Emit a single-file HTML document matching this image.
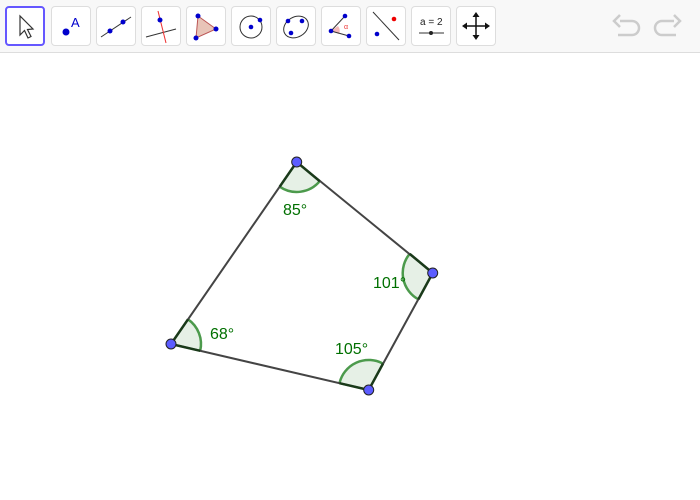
<!DOCTYPE html>
<html><head><style>
body{margin:0;width:700px;height:500px;background:#fff;overflow:hidden;font-family:"Liberation Sans",sans-serif}
.tb{position:absolute;left:0;top:0;width:700px;height:52px;background:#f8f8f8;border-bottom:1px solid #ddd}
.b{position:absolute;top:6px;width:38px;height:38px;background:#fff;border:1px solid #ddd;border-radius:4px}
.b svg{position:absolute;left:0;top:0}
.sel{border:2px solid #6557ff;width:36px;height:36px}
</style></head><body>
<div class="tb">
<div class="b sel" style="left:5px"><svg width="36" height="36"><path d="M13 8 L13 27 L17.5 22.5 L21 30 L24 28.5 L20.5 21.5 L26 21 Z" fill="#fff" stroke="#333" stroke-width="1.2"/></svg></div>
<div class="b" style="left:51px"><svg width="38" height="38"><circle cx="14" cy="25" r="3.5" fill="#00c"/><text x="19" y="20" font-size="13" fill="#00c" font-family="Liberation Sans">A</text></svg></div>
<div class="b" style="left:96px"><svg width="38" height="38"><line x1="4" y1="30" x2="34" y2="10" stroke="#333"/><circle cx="13" cy="24" r="2.5" fill="#00c"/><circle cx="26" cy="15" r="2.5" fill="#00c"/></svg></div>
<div class="b" style="left:141px"><svg width="38" height="38"><line x1="4" y1="30" x2="34" y2="22" stroke="#333"/><line x1="16" y1="4" x2="24" y2="36" stroke="#e33"/><circle cx="18" cy="13" r="2.5" fill="#00c"/></svg></div>
<div class="b" style="left:186px"><svg width="38" height="38"><path d="M11 9 L29 22 L9 31 Z" fill="#e8c4b8" stroke="#b55"/><circle cx="11" cy="9" r="2.5" fill="#00c"/><circle cx="29" cy="22" r="2.5" fill="#00c"/><circle cx="9" cy="31" r="2.5" fill="#00c"/></svg></div>
<div class="b" style="left:231px"><svg width="38" height="38"><circle cx="19" cy="20" r="11" fill="none" stroke="#333"/><circle cx="19" cy="20" r="2.3" fill="#00c"/><circle cx="28" cy="13" r="2.3" fill="#00c"/></svg></div>
<div class="b" style="left:276px"><svg width="38" height="38"><ellipse cx="19" cy="20" rx="13" ry="10" transform="rotate(-30 19 20)" fill="none" stroke="#333"/><circle cx="11" cy="14" r="2.3" fill="#00c"/><circle cx="25" cy="14" r="2.3" fill="#00c"/><circle cx="14" cy="26" r="2.3" fill="#00c"/></svg></div>
<div class="b" style="left:321px"><svg width="38" height="38"><path d="M9 24 L16 19 A8 8 0 0 1 17 27 Z" fill="#f4b8b8"/><line x1="9" y1="24" x2="23" y2="9" stroke="#333"/><line x1="9" y1="24" x2="27" y2="29" stroke="#333"/><circle cx="9" cy="24" r="2.3" fill="#00c"/><circle cx="23" cy="9" r="2.3" fill="#00c"/><circle cx="27" cy="29" r="2.3" fill="#00c"/><text x="22" y="22" font-size="7" fill="#e33">α</text></svg></div>
<div class="b" style="left:366px"><svg width="38" height="38"><line x1="6" y1="5" x2="32" y2="33" stroke="#333"/><circle cx="27" cy="12" r="2.3" fill="#e00"/><circle cx="10" cy="27" r="2.3" fill="#00c"/></svg></div>
<div class="b" style="left:411px"><svg width="38" height="38"><text x="8" y="18" font-size="10" fill="#222">a = 2</text><line x1="7" y1="26" x2="32" y2="26" stroke="#333"/><circle cx="19" cy="26" r="2" fill="#222"/></svg></div>
<div class="b" style="left:456px"><svg width="38" height="38"><path d="M19 7 V31 M7 19 H31" stroke="#111" stroke-width="1.5"/><path d="M19 5 L15.5 10 H22.5Z M19 33 L15.5 28 H22.5Z M5 19 L10 15.5 V22.5Z M33 19 L28 15.5 V22.5Z" fill="#111"/></svg></div>
<svg style="position:absolute;left:610px;top:12px" width="75" height="30"><path d="M10 9 H22 A7 7 0 0 1 22 23 H8 M10 3 L4 9 L10 15" fill="none" stroke="#ccc" stroke-width="2.5"/><path d="M64 9 H52 A7 7 0 0 0 52 23 H66 M64 3 L70 9 L64 15" fill="none" stroke="#ccc" stroke-width="2.5"/></svg>
</div>
<svg style="position:absolute;left:0;top:0" width="700" height="500">
<g fill="#e6f0e6" stroke="none">
<path d="M296.7,162 L279.7,186.7 A30,30 0 0 0 319.7,181.2 Z"/>
<path d="M432.7,273 L409.7,253.8 A30,30 0 0 0 418.4,299.4 Z"/>
<path d="M368.7,390 L339.5,383.2 A30,30 0 0 1 383,363.6 Z"/>
<path d="M171,344 L188,319.3 A30,30 0 0 1 200.2,350.8 Z"/>
</g>
<g fill="none" stroke="#4c9a4c" stroke-width="2.5">
<path d="M279.7,186.7 A30,30 0 0 0 319.7,181.2"/>
<path d="M409.7,253.8 A30,30 0 0 0 418.4,299.4"/>
<path d="M339.5,383.2 A30,30 0 0 1 383,363.6"/>
<path d="M188,319.3 A30,30 0 0 1 200.2,350.8"/>
</g>
<path d="M296.7,162 L432.7,273 L368.7,390 L171,344 Z" fill="none" stroke="#444" stroke-width="2"/>
<path d="M296.7,162 L279.7,186.7 M296.7,162 L319.7,181.2 M432.7,273 L409.7,253.8 M432.7,273 L418.4,299.4 M368.7,390 L339.5,383.2 M368.7,390 L383,363.6 M171,344 L188,319.3 M171,344 L200.2,350.8" stroke="#1a3a1a" stroke-width="2.5"/>
<g fill="#5c5cff" stroke="#222" stroke-width="1">
<circle cx="296.7" cy="162" r="5"/><circle cx="432.7" cy="273" r="5"/><circle cx="368.7" cy="390" r="5"/><circle cx="171" cy="344" r="5"/>
</g>
<g fill="#007000" font-size="16" font-family="Liberation Sans">
<text x="283" y="215">85°</text>
<text x="373" y="288">101°</text>
<text x="335" y="354">105°</text>
<text x="210" y="339">68°</text>
</g>
</svg>
</body></html>
